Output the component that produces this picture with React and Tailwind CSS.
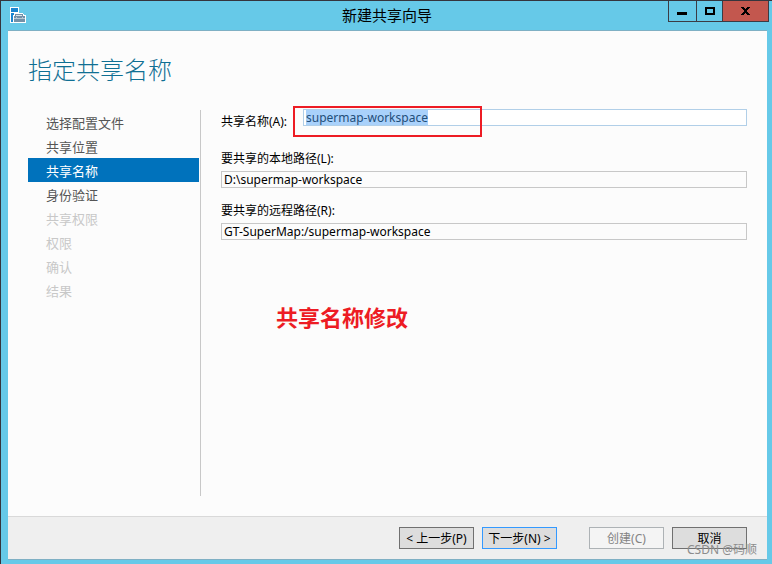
const steps = [
  { label: "选择配置文件", state: "done" },
  { label: "共享位置", state: "done" },
  { label: "共享名称", state: "current" },
  { label: "身份验证", state: "done" },
  { label: "共享权限", state: "disabled" },
  { label: "权限", state: "disabled" },
  { label: "确认", state: "disabled" },
  { label: "结果", state: "disabled" },
];

const stepStyles = {
  done: "text-[#555555]",
  current: "bg-[#0072bc] text-white",
  disabled: "text-[#c8c8c8]",
};

function ServerIcon() {
  return (
    <svg width="16" height="16" viewBox="0 0 16 16" shapeRendering="crispEdges" aria-hidden="true">
      <path d="M0 0h9v6h4v1h1v1h2v8H0z" fill="#fff" />
      <path d="M1 1h7v4H1zM1 6h3v2H3v7H1z" fill="#1a86d0" />
      <path d="M5 7h8v2h-1V8H6v1H5z" fill="#7391a8" />
      <path d="M6 8h6v1H6z" fill="#dbe6ec" />
      <path d="M4 9h11v6H4z" fill="#7391a8" />
      <path d="M4 11h2v-1h1v1h5v-1h1v1h2v1H4z" fill="#b9c9d4" />
    </svg>
  );
}

function TitleBar() {
  return (
    <header className="flex h-[29px] items-start">
      <div className="w-[98px] pt-[6px] pl-[2px]">
        <ServerIcon />
      </div>
      <h1 className="flex-1 text-center text-[15px] leading-7 text-black">新建共享向导</h1>
      <div className="-mr-[2px] flex h-[21px] border-x border-b border-[#3b3b44]">
        <button aria-label="最小化" className="flex w-[27px] items-center justify-center pr-[2px] pb-px">
          <svg width="10" height="9" viewBox="0 0 10 9" aria-hidden="true">
            <path d="M0 6h10v3H0z" />
          </svg>
        </button>
        <button aria-label="最大化" className="flex w-[26px] items-center justify-center border-l border-[#3b3b44]">
          <svg width="10" height="8" viewBox="0 0 10 8" aria-hidden="true">
            <path d="M1 1h8v6H1z" fill="none" stroke="#000" strokeWidth="2" />
          </svg>
        </button>
        <button aria-label="关闭" className="flex w-[46px] items-center justify-center border-l border-[#3b3b44] bg-[#c3574e]">
          <svg width="9" height="8" viewBox="0 0 9 8" shapeRendering="crispEdges" aria-hidden="true">
            <path d="M0 0h3v1h1v1h1V1h1V0h3v1H8v1H7v1H6v2h1v1h1v1h1v1H6V7H5V6H4v1H3v1H0V7h1V6h1V5h1V3H2V2H1V1H0z" />
          </svg>
        </button>
      </div>
    </header>
  );
}

function StepList() {
  return (
    <nav className="w-[173px] shrink-0 border-r border-[#c8c8c8] pr-px">
      <ol>
        {steps.map((step) => (
          <li
            key={step.label}
            aria-current={step.state === "current" ? "step" : undefined}
            className={`h-6 pl-[18px] text-[13px] leading-[26px] ${stepStyles[step.state]}`}
          >
            {step.label}
          </li>
        ))}
      </ol>
    </nav>
  );
}

function PathField({ id, label, value }) {
  return (
    <div className="flex flex-col gap-1">
      <label htmlFor={id} className="leading-4">{label}</label>
      <input id={id} readOnly defaultValue={value} className="h-[17px] w-full border border-[#c8c8c8] bg-transparent px-[2px] leading-4 outline-none" />
    </div>
  );
}

function WizardButton({ className = "border-[#707070] bg-[#dddddd]", ...props }) {
  return <button className={`h-[22px] w-[75px] border pt-[2px] text-center text-xs whitespace-nowrap ${className}`} {...props} />;
}

export default function App() {
  return (
    <div className="flex min-h-screen flex-col border-t border-l border-[#35353d] bg-[#66c9e8] pr-[5px] pb-[4px] pl-[7px] font-['Noto_Sans','Noto_Sans_CJK_SC',sans-serif] text-xs text-black">
      <TitleBar />
      <div className="flex flex-1 flex-col border-y border-[#7fb0c4] bg-[#fcfcfc]">
        <main className="flex flex-1 flex-col px-5 pt-[21px] pb-5">
          <h2 className="text-2xl leading-9 font-light text-[#0f6f93]">指定共享名称</h2>
          <div className="mt-[22px] flex flex-1">
            <StepList />
            <form className="-mt-px flex flex-1 flex-col gap-[21px] pl-5">
              <div className="flex items-start">
                <label htmlFor="share-name" className="w-[82px] pt-[5px] leading-4 whitespace-nowrap">共享名称(A):</label>
                <div className="relative flex-1">
                  <input
                    id="share-name"
                    autoFocus
                    onFocus={(event) => event.target.select()}
                    defaultValue="supermap-workspace"
                    className="block h-[17px] w-full border border-[#b1cfe8] bg-white px-[2px] leading-4 text-[#1f4e79] caret-transparent outline-none selection:bg-[#a9d1fb] selection:text-[#1f4e79]"
                  />
                  <div className="pointer-events-none absolute -top-[3px] -left-[10px] h-[31px] w-[189px] border-2 border-[#ed1c24]" />
                </div>
              </div>
              <div className="flex flex-col gap-[15px]">
                <PathField id="local-path" label="要共享的本地路径(L):" value="D:\supermap-workspace" />
                <PathField id="remote-path" label="要共享的远程路径(R):" value="GT-SuperMap:/supermap-workspace" />
              </div>
              <p className="pt-10 pl-[55px] text-[22px] leading-8 font-bold text-[#ed1c24]">共享名称修改</p>
            </form>
          </div>
        </main>
        <footer className="relative flex h-[43px] justify-end border-t border-[#d9d9d9] bg-[#efefef] pt-[10px] pr-5">
          <div className="flex gap-2">
            <WizardButton>&lt; 上一步(P)</WizardButton>
            <WizardButton className="border-[#3399ff] bg-[#dddddd]">下一步(N) &gt;</WizardButton>
          </div>
          <div className="ml-8 flex gap-2">
            <WizardButton disabled className="border-[#adb2b5] bg-[#f4f4f4] text-[#838383]">创建(C)</WizardButton>
            <WizardButton>取消</WizardButton>
          </div>
          <span className="pointer-events-none absolute right-[10px] bottom-[1px] text-xs leading-4 text-[#8c8c8c]">CSDN @码顺</span>
        </footer>
      </div>
    </div>
  );
}
